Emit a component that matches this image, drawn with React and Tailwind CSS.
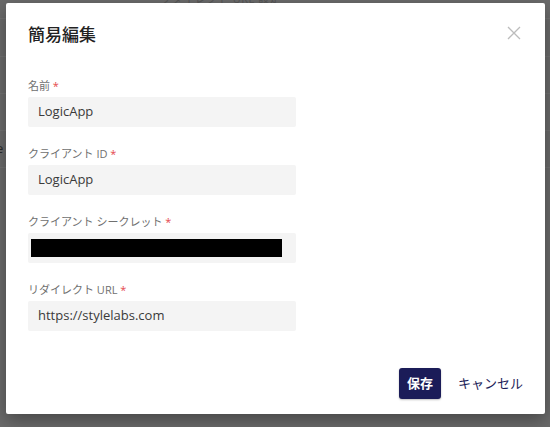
import React from 'react';

const fields = [
  { label: '名前', value: 'LogicApp' },
  { label: 'クライアント ID', value: 'LogicApp' },
  { label: 'クライアント シークレット', secret: true },
  { label: 'リダイレクト URL', value: 'https://stylelabs.com' },
];

const App = () => {
  return (
    <div
      className="relative w-[550px] h-[427px] overflow-hidden bg-[#6b6b6b]"
      style={{ fontFamily: '"Open Sans", "Noto Sans CJK JP", sans-serif' }}
    >
      {/* page behind the overlay */}
      <div className="absolute inset-0 pointer-events-none">
        <div className="absolute left-[160px] top-[-9px] text-[11px] text-[#555] tracking-wider">
          リダイレクト URL 設定
        </div>
        <div className="absolute left-0 right-0 top-[18px] h-px bg-[#737373]"></div>
        <div className="absolute left-0 right-0 top-[56px] h-px bg-[#737373]"></div>
        <div className="absolute left-0 right-0 top-[93px] h-px bg-[#737373]"></div>
        <div className="absolute left-0 right-0 top-[130px] h-px bg-[#737373]"></div>
        <div className="absolute left-0 right-0 top-[167px] h-px bg-[#737373]"></div>
        <div className="absolute left-[-4px] top-[139px] text-[13px] text-[#2a2a2a]">e</div>
      </div>

      {/* dialog */}
      <div className="relative pl-[6px] pt-[3px]">
        <div className="relative w-[539px] h-[411px] bg-white rounded-[2px] shadow-[0_6px_18px_rgba(0,0,0,0.35)] pt-[20px] px-[22px] flex flex-col">
          <div className="flex items-start justify-between">
            <h2 className="text-[17px] leading-[24px] font-medium text-[#222]">簡易編集</h2>
            <button className="mt-[3px] mr-[2px] text-[#bcbcbc]">
              <svg width="14" height="14" viewBox="0 0 14 14" fill="none" stroke="currentColor" strokeWidth="1.3">
                <path d="M1 1 L13 13 M13 1 L1 13" />
              </svg>
            </button>
          </div>

          <div className="mt-[31px] flex flex-col">
            {fields.map((f, i) => (
              <div key={i} className="flex flex-col mb-[19px]">
                <label className="text-[11px] leading-[16px] text-[#707070]">
                  {f.label} <span className="text-[#e5484d]">*</span>
                </label>
                <div className="mt-[3px] w-[268px] h-[30px] bg-[#f4f4f4] rounded-[2px] flex items-center px-[10px]">
                  {f.secret ? (
                    <div className="-ml-[7px] w-[251px] h-[18px] bg-black"></div>
                  ) : (
                    <span className="text-[13px] text-[#3a3a3a]">{f.value}</span>
                  )}
                </div>
              </div>
            ))}
          </div>

          <div className="mt-[18px] flex items-center justify-end gap-[17px]">
            <button className="h-[31px] w-[42px] rounded-[3px] bg-[#1b1c58] text-white text-[13px] font-bold shadow-[0_1px_2px_rgba(0,0,0,0.25)]">
              保存
            </button>
            <button className="text-[13px] text-[#1b1c58]">キャンセル</button>
          </div>
        </div>
      </div>
    </div>
  );
};

export default App;
